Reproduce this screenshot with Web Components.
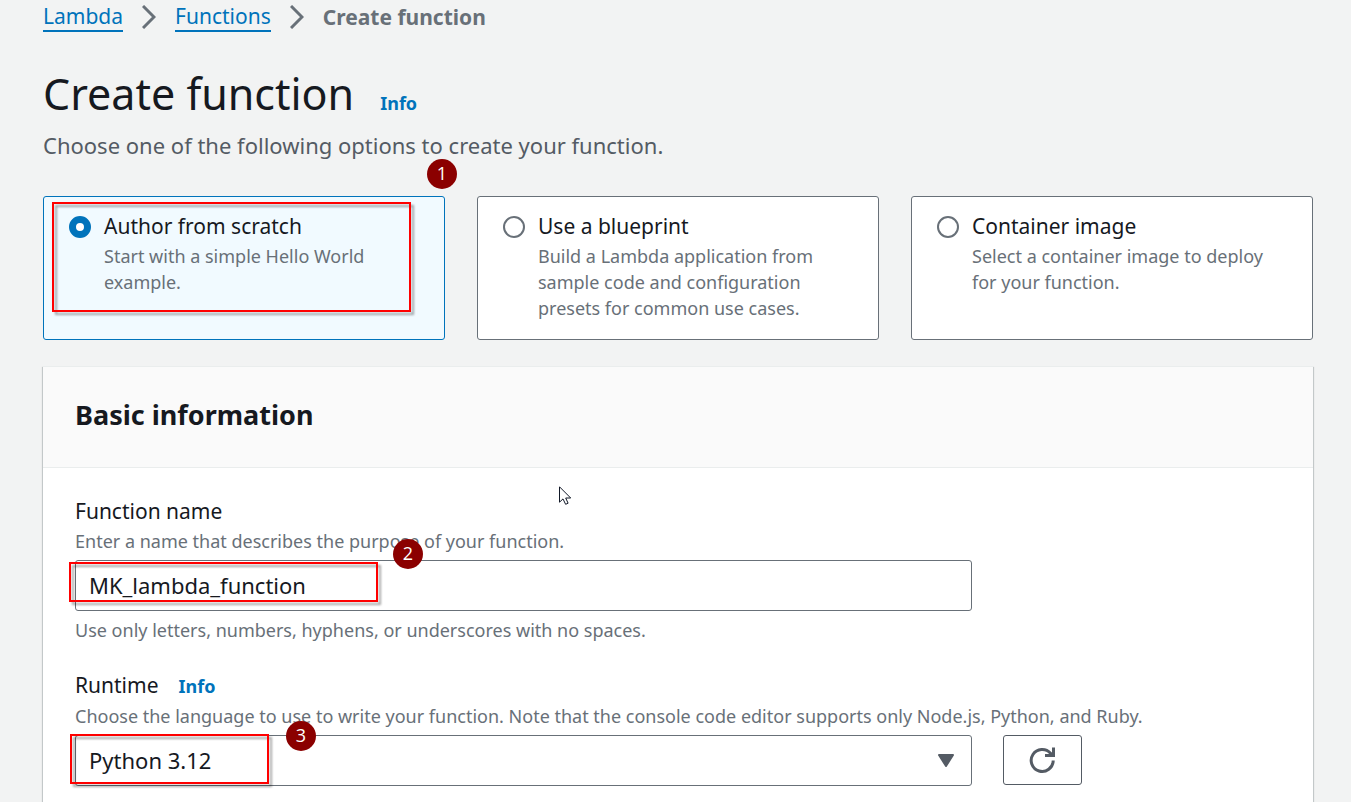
<!DOCTYPE html>
<html lang="en">
<head>
<meta charset="utf-8">
<meta name="viewport" content="width=device-width, initial-scale=1">
<title>Create function</title>
<style>
  body {
    margin: 0;
    background: #f2f3f3;
    color: #16191f;
    font-family: "Noto Sans", "Open Sans", sans-serif;
    font-size: 21px;
    --link: #0073bb;
    --muted: #687078;
    --line: #545b64;
    --hint: 18px;
  }
</style>
</head>
<body>
<create-function-page></create-function-page>

<script>
const define = (name, html) => {
  const template = document.createElement("template");
  template.innerHTML = html;
  customElements.define(name, class extends HTMLElement {
    constructor() {
      super();
      this.attachShadow({ mode: "open" }).append(template.content.cloneNode(true));
    }
  });
};

/* Red frame drawn over a control */
define("mark-frame", `
<style>
  :host {
    position: absolute;
    box-sizing: border-box;
    border: 2px solid #f00;
    filter: drop-shadow(3px 3px 1px rgba(0, 0, 0, .35));
    pointer-events: none;
  }
</style>`);

/* Numbered step marker */
define("mark-step", `
<style>
  :host {
    position: absolute;
    z-index: 1;
    width: 30px;
    height: 30px;
    border-radius: 50%;
    background: #8b0000;
    color: #fff;
    font: 18px/29px "Open Sans", sans-serif;
    text-align: center;
  }
</style><slot></slot>`);

define("info-link", `
<style>
  :host { display: inline-block; }
  a { color: var(--link); font-size: 18px; font-weight: 700; text-decoration: none; }
</style><a href="#info">Info</a>`);

define("bread-crumbs", `
<style>
  :host { display: block; }
  ol { display: flex; align-items: center; gap: 19px; margin: 0; padding: 0; list-style: none; line-height: 28px; }
  li { display: flex; align-items: center; gap: 19px; }
  a { color: var(--link); text-decoration: none; border-bottom: 2px solid; line-height: 28px; }
  strong { color: var(--muted); }
  svg { width: 14px; height: 24px; }
</style>
<nav aria-label="Breadcrumbs"><ol>
  <li><a href="#lambda">Lambda</a><svg viewBox="0 0 14 24" fill="none" stroke="#687078" stroke-width="3"><path d="M1 1 12 12 1 23"/></svg></li>
  <li><a href="#functions">Functions</a><svg viewBox="0 0 14 24" fill="none" stroke="#687078" stroke-width="3"><path d="M1 1 12 12 1 23"/></svg></li>
  <li><strong>Create function</strong></li>
</ol></nav>`);

define("page-heading", `
<style>
  :host { display: block; }
  .title { display: flex; align-items: baseline; gap: 26px; }
  h1 { margin: 0; font-size: 43px; font-weight: 400; line-height: 56px; }
  p { margin: 7px 0 0; color: var(--line); font-size: 22px; line-height: 32px; }
</style>
<div class="title"><h1><slot></slot></h1><info-link></info-link></div>
<p><slot name="description"></slot></p>`);

define("option-tiles", `
<style>
  :host { display: grid; grid-template-columns: repeat(3, 1fr); gap: 32px; }
  .tile { position: relative; }
  label {
    display: grid;
    grid-template-columns: 24px 1fr;
    column-gap: 12px;
    box-sizing: border-box;
    height: 100%;
    min-height: 144px;
    padding: 14px 24px 16px;
    border: 1px solid var(--muted);
    border-radius: 3px;
    background: #fff;
  }
  label:has(:checked) { border-color: var(--link); background: #f1faff; }
  input {
    appearance: none;
    box-sizing: border-box;
    width: 22px;
    height: 22px;
    margin: 5px 1px 0;
    border: 2px solid var(--muted);
    border-radius: 50%;
    background: #fff;
  }
  input:checked { border: 7px solid var(--link); }
  strong { display: block; margin-bottom: 2px; font-weight: 400; line-height: 30px; }
  small { display: block; color: var(--muted); font-size: var(--hint); line-height: 26px; }
  mark-frame { left: 9px; top: 6px; width: 359px; height: 110px; }
  mark-step { left: 384px; top: -37px; }
</style>
<div class="tile">
  <label><input type="radio" name="author" checked><span><strong>Author from scratch</strong><small>Start with a simple Hello World example.</small></span></label>
  <mark-frame></mark-frame><mark-step>1</mark-step>
</div>
<div class="tile">
  <label><input type="radio" name="author"><span><strong>Use a blueprint</strong><small>Build a Lambda application from sample code and configuration presets for common use cases.</small></span></label>
</div>
<div class="tile">
  <label><input type="radio" name="author"><span><strong>Container image</strong><small>Select a container image to deploy for your function.</small></span></label>
</div>`);

define("info-panel", `
<style>
  :host {
    display: block;
    background: #fff;
    border-top: 1px solid #eaeded;
    box-shadow: 0 1px 1px rgba(0, 28, 36, .3), 1px 1px 1px rgba(0, 28, 36, .15), -1px 1px 1px rgba(0, 28, 36, .15);
  }
  header { padding: 28px 32px 32px; background: #fafafa; border-bottom: 1px solid #eaeded; }
  h2 { margin: 0; font-size: 27px; font-weight: 700; line-height: 40px; }
  .body { display: flex; flex-direction: column; gap: 25px; padding: 27px 32px 0; }
</style>
<header><h2><slot name="heading"></slot></h2></header>
<div class="body"><slot></slot></div>`);

const fieldCss = `
  :host { display: block; }
  .label { display: flex; align-items: baseline; gap: 20px; line-height: 32px; }
  p { margin: 0; color: var(--muted); font-size: var(--hint); line-height: 28px; }
  .row { display: flex; gap: 31px; margin-top: 5px; }
  .control { position: relative; width: calc(75% - 8px); }
  input, select {
    appearance: none;
    display: block;
    box-sizing: border-box;
    width: 100%;
    height: 51px;
    margin: 0;
    padding: 0 13px 2px;
    border: 1px solid var(--muted);
    border-radius: 3px;
    background: #fff;
    color: inherit;
    font: inherit;
    font-size: 22px;
  }`;

define("name-field", `
<style>${fieldCss}
  p:last-child { margin-top: 5px; }
  mark-frame { left: -6px; top: 2px; width: 309px; height: 40px; }
  mark-step { left: 318px; top: -21px; }
</style>
<div class="label"><label for="name">Function name</label></div>
<p>Enter a name that describes the purpose of your function.</p>
<div class="row"><div class="control">
  <input id="name" type="text" value="MK_lambda_function">
  <mark-frame></mark-frame><mark-step>2</mark-step>
</div></div>
<p>Use only letters, numbers, hyphens, or underscores with no spaces.</p>`);

define("runtime-field", `
<style>${fieldCss}
  .arrow { position: absolute; right: 17px; top: 18px; width: 18px; height: 15px; pointer-events: none; }
  button {
    display: grid;
    place-items: center;
    box-sizing: border-box;
    width: 79px;
    height: 50px;
    padding: 0;
    border: 1px solid var(--line);
    border-radius: 3px;
    background: #fff;
  }
  button svg { width: 26px; height: 26px; }
  mark-frame { left: -5px; top: -1px; width: 199px; height: 50px; }
  mark-step { left: 211px; top: -14px; }
</style>
<div class="label"><label for="runtime">Runtime</label><info-link></info-link></div>
<p>Choose the language to use to write your function. Note that the console code editor supports only Node.js, Python, and Ruby.</p>
<div class="row">
  <div class="control">
    <select id="runtime"><option>Python 3.12</option></select>
    <svg class="arrow" viewBox="0 0 18 15"><path d="M2 2h14L9 13Z" fill="#545b64" stroke="#545b64" stroke-width="2" stroke-linejoin="round"/></svg>
    <mark-frame></mark-frame><mark-step>3</mark-step>
  </div>
  <button type="button" aria-label="Refresh runtimes">
    <svg viewBox="0 0 26 26" fill="none" stroke="#545b64" stroke-width="3"><path d="M24.200 13.500A11 11 0 1 1 21.500 6.200L23.500 8.500"/><path d="M24.500.5v8H16"/></svg>
  </button>
</div>`);

define("mouse-pointer", `
<style>
  :host { position: absolute; left: 516px; top: 120px; width: 13px; height: 20px; }
  svg { display: block; width: 13px; height: 20px; }
</style>
<svg viewBox="0 0 13 20"><path d="M.5.8v15.400L4 12.900l2.600 5.400 2.500-1.100L6.700 12h5Z" fill="#fff" stroke="#111827"/></svg>`);

define("create-function-page", `
<style>
  :host { display: flex; flex-direction: column; box-sizing: border-box; min-height: 100vh; padding: 2px 38px 0 43px; }
  page-heading { margin-top: 34px; }
  option-tiles { margin-top: 35px; }
  .panel { position: relative; display: grid; flex: 1; margin-top: 26px; }
</style>
<bread-crumbs></bread-crumbs>
<page-heading>Create function<span slot="description">Choose one of the following options to create your function.</span></page-heading>
<option-tiles></option-tiles>
<div class="panel">
  <info-panel><span slot="heading">Basic information</span><name-field></name-field><runtime-field></runtime-field></info-panel>
  <mouse-pointer></mouse-pointer>
</div>`);
</script>
</body>
</html>
